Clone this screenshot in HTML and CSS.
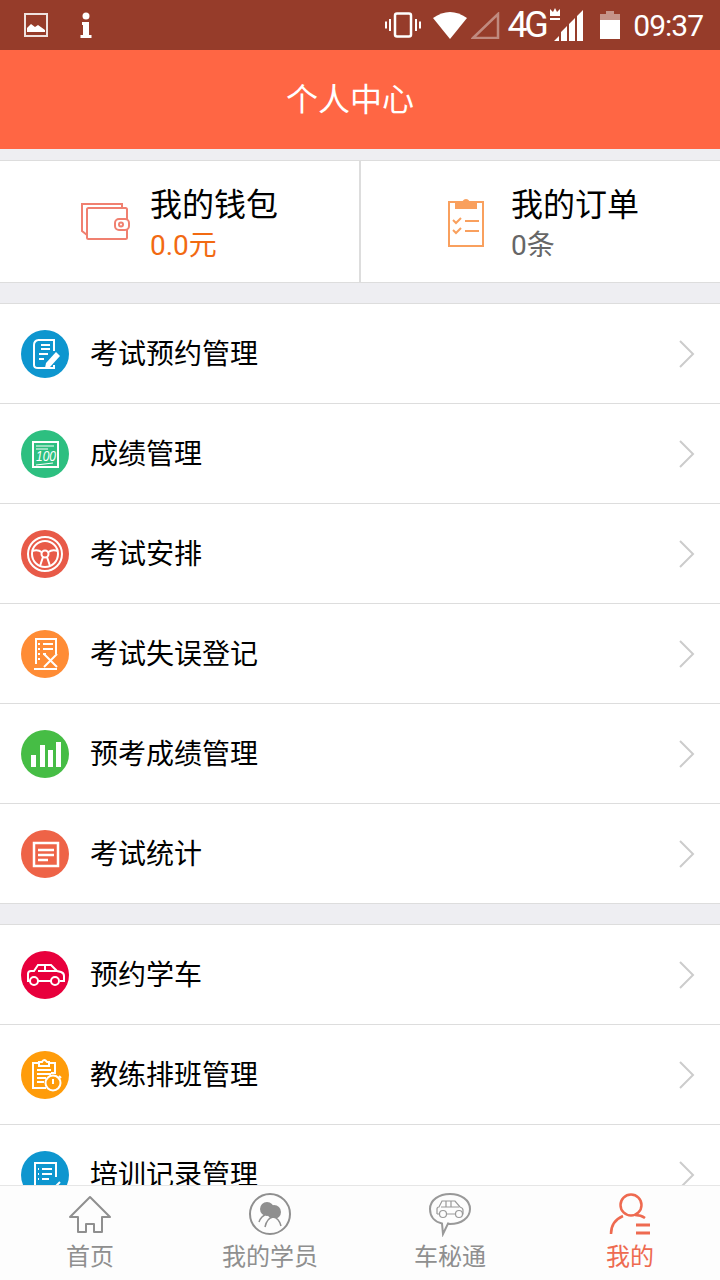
FILE: index.html
```html
<!DOCTYPE html>
<html lang="zh-CN">
<head>
  <meta charset="UTF-8" />
  <title>个人中心</title>
  <link rel="stylesheet" href="styles.css">
</head>
<body>
  <div class="page">
    <div class="status">
      <div class="status-left">
        <svg class="st-img" width="24" height="24" viewBox="0 0 24 24"><rect x="1" y="1" width="22" height="22" fill="none" stroke="#fff" stroke-width="2" opacity=".85"/><path d="M3 19v-4l4-4 4 3 3-2 7 5v2z" fill="#fff"/></svg>
        <svg class="st-i" width="12" height="26" viewBox="0 0 12 26"><circle cx="6" cy="4" r="3.500" fill="#fff"/><path d="M2 10h7v13h2.500v3H.5v-3H3v-10H2z" fill="#fff"/></svg>
      </div>
      <div class="status-right">
        <svg width="36" height="26" viewBox="0 0 36 26"><rect x="10" y="1.500" width="16" height="23" rx="2" fill="none" stroke="#fff" stroke-width="2.500"/><path d="M5 7v12M1 9.500v7M31 7v12M35 9.500v7" stroke="#fff" stroke-width="2"/></svg>
        <svg class="st-wifi" width="34" height="28" viewBox="0 0 34 28"><path d="M0 7Q17-5 34 7L17 28z" fill="#fff"/></svg>
        <svg class="st-sig" width="29" height="27" viewBox="0 0 29 27"><path d="M2 26L27 2v24z" fill="none" stroke="#fff" stroke-opacity=".4" stroke-width="2.500"/></svg>
        <span class="st-4g">4G</span>
        <svg class="st-bars" width="38" height="34" viewBox="0 0 38 34"><path d="M1 1l3 3 2-4 2 4 3-3v7H1zM1 10h10v2H1z" fill="#fff"/><path d="M5 33l5-5v5zM12 33v-9l6-6v15zM20 33V16l6-6v23zM28 33V8l6-6v31z" fill="#fff"/></svg>
        <svg class="st-bat" width="20" height="28" viewBox="0 0 20 28"><path d="M6 0h8v3h6v7H0V3h6z" fill="#fff" opacity=".45"/><rect y="9" width="20" height="19" fill="#fff"/></svg>
        <span class="st-time">09:37</span>
      </div>
    </div>

    <div class="header">个人中心</div>

    <div class="scroll">
      <div class="summary">
        <div class="cell cell-wallet">
          <svg class="wallet-ic" width="50" height="40" viewBox="0 0 50 40" fill="none" stroke="#f08070" stroke-width="2"><path d="M7 33L2 29V2h40v5"/><rect x="7" y="6" width="40" height="31" rx="1.500" fill="#fff"/><rect x="35" y="17" width="14" height="11" rx="4" fill="#fff"/><circle cx="41" cy="22.500" r="2"/></svg>
          <div>
            <div class="cell-title">我的钱包</div>
            <div class="cell-sub cell-sub-orange">0.0元</div>
          </div>
        </div>
        <div class="cell cell-order">
          <svg class="order-ic" width="36" height="50" viewBox="0 0 36 50" fill="none" stroke="#f9a05e" stroke-width="2"><path d="M8 5H1v44h34V5h-7"/><path d="M8 11V5h7q3-4 6 0h7v6z" fill="#f9a05e"/><path d="M5 23l3 3 5-5M5 33l3 3 5-5M17 24h14M17 34h14"/></svg>
          <div>
            <div class="cell-title">我的订单</div>
            <div class="cell-sub">0条</div>
          </div>
        </div>
      </div>

      <div class="group">
        <div class="row">
          <svg class="row-ic" width="48" height="48" viewBox="0 0 48 48"><circle cx="24" cy="24" r="24" fill="#0e96cf"/><g fill="none" stroke="#fff" stroke-width="2"><path d="M17 10h16v11M17 10q-4 1-4 5v20q0 3 4 3h16v-3"/><path d="M20 15h9M20 19h9M18 24h9M18 29h5"/></g><path d="M25 33l10-11 4 4-10 11-5 1z" fill="#fff"/></svg>
          <span class="row-name">考试预约管理</span>
          <svg class="chev" width="16" height="28" viewBox="0 0 16 28"><path d="M1 1l13 13L1 27" fill="none" stroke="#ccc" stroke-width="2"/></svg>
        </div>
        <div class="row">
          <svg class="row-ic" width="48" height="48" viewBox="0 0 48 48"><circle cx="24" cy="24" r="24" fill="#2dbf80"/><rect x="12" y="12" width="25" height="25" fill="none" stroke="#fff" stroke-width="2"/><path d="M15 16h18M15 19h12" stroke="#fff"/><text class="score" x="15" y="31" textLength="20" lengthAdjust="spacingAndGlyphs">100</text><path d="M15 35l17-2" fill="none" stroke="#fff"/></svg>
          <span class="row-name">成绩管理</span>
          <svg class="chev" width="16" height="28" viewBox="0 0 16 28"><path d="M1 1l13 13L1 27" fill="none" stroke="#ccc" stroke-width="2"/></svg>
        </div>
        <div class="row">
          <svg class="row-ic" width="48" height="48" viewBox="0 0 48 48"><circle cx="24" cy="24" r="24" fill="#e85a48"/><g fill="none" stroke="#fff" stroke-width="2"><circle cx="24" cy="24" r="17"/><circle cx="24" cy="24" r="13"/><circle cx="24" cy="24" r="3.500"/><path d="M11 21q6-2 9.500 1M27.500 22q3.500-3 9.500-1M22 27l-3 9M26 27l3 9"/></g></svg>
          <span class="row-name">考试安排</span>
          <svg class="chev" width="16" height="28" viewBox="0 0 16 28"><path d="M1 1l13 13L1 27" fill="none" stroke="#ccc" stroke-width="2"/></svg>
        </div>
        <div class="row">
          <svg class="row-ic" width="48" height="48" viewBox="0 0 48 48"><circle cx="24" cy="24" r="24" fill="#ff8c35"/><g fill="none" stroke="#fff" stroke-width="2"><path d="M15 34V9h20v15"/><path d="M22 14h10M22 19h10M22 24h3M17 14h2M17 19h2M17 24h2M17 29h2"/><path d="M23 24l13 13M36 24L23 37M13 39h23"/></g></svg>
          <span class="row-name">考试失误登记</span>
          <svg class="chev" width="16" height="28" viewBox="0 0 16 28"><path d="M1 1l13 13L1 27" fill="none" stroke="#ccc" stroke-width="2"/></svg>
        </div>
        <div class="row">
          <svg class="row-ic" width="48" height="48" viewBox="0 0 48 48"><circle cx="24" cy="24" r="24" fill="#46bd45"/><path d="M10 25h5v12h-5zM19 15h5v22h-5zM27 20h5v17h-5zM35 12h5v25h-5z" fill="#fff"/></svg>
          <span class="row-name">预考成绩管理</span>
          <svg class="chev" width="16" height="28" viewBox="0 0 16 28"><path d="M1 1l13 13L1 27" fill="none" stroke="#ccc" stroke-width="2"/></svg>
        </div>
        <div class="row">
          <svg class="row-ic" width="48" height="48" viewBox="0 0 48 48"><circle cx="24" cy="24" r="24" fill="#ee6347"/><rect x="13" y="13" width="24" height="23" fill="none" stroke="#fff" stroke-width="2.500"/><path d="M17 20h16M17 25h16M17 30h10" stroke="#fff" stroke-width="2.500"/></svg>
          <span class="row-name">考试统计</span>
          <svg class="chev" width="16" height="28" viewBox="0 0 16 28"><path d="M1 1l13 13L1 27" fill="none" stroke="#ccc" stroke-width="2"/></svg>
        </div>
      </div>

      <div class="group">
        <div class="row">
          <svg class="row-ic" width="48" height="48" viewBox="0 0 48 48"><circle cx="24" cy="24" r="24" fill="#e8003c"/><g fill="none" stroke="#fff" stroke-width="2"><path d="M9 30H7v-7q0-3 3-3h3l4-6h13l6 6 4 1q3 1 3 4v5h-4M17 30h13"/><path d="M17 20h19M24 14v6"/><circle cx="13" cy="30" r="4"/><circle cx="34" cy="30" r="4"/></g></svg>
          <span class="row-name">预约学车</span>
          <svg class="chev" width="16" height="28" viewBox="0 0 16 28"><path d="M1 1l13 13L1 27" fill="none" stroke="#ccc" stroke-width="2"/></svg>
        </div>
        <div class="row">
          <svg class="row-ic" width="48" height="48" viewBox="0 0 48 48"><circle cx="24" cy="24" r="24" fill="#ff9c0a"/><g fill="none" stroke="#fff" stroke-width="2"><path d="M18 12h-6v25h13M28 12h6v11"/><path d="M18 15v-4h3q2-4 5 0h2v4zM16 19h14M16 23h14M16 27h9M16 31h7"/></g><circle cx="32" cy="32" r="7.500" fill="#ff9c0a" stroke="#fff" stroke-width="2"/><path d="M32 28v5M30 22h4M38 25l2 2" stroke="#fff" stroke-width="2"/></svg>
          <span class="row-name">教练排班管理</span>
          <svg class="chev" width="16" height="28" viewBox="0 0 16 28"><path d="M1 1l13 13L1 27" fill="none" stroke="#ccc" stroke-width="2"/></svg>
        </div>
        <div class="row">
          <svg class="row-ic" width="48" height="48" viewBox="0 0 48 48"><circle cx="24" cy="24" r="24" fill="#0e96cf"/><g fill="none" stroke="#fff" stroke-width="2"><path d="M35 26V12H14v26h14"/><path d="M21 18h10M21 23h10M21 28h7M17 18h1M17 23h1M17 28h1M27 36l4 3 8-8"/></g></svg>
          <span class="row-name">培训记录管理</span>
          <svg class="chev" width="16" height="28" viewBox="0 0 16 28"><path d="M1 1l13 13L1 27" fill="none" stroke="#ccc" stroke-width="2"/></svg>
        </div>
      </div>
    </div>

    <div class="tabs">
      <div class="tab">
        <svg width="44" height="44" viewBox="0 0 44 44" fill="none" stroke="#8f8f8f" stroke-width="2"><path d="M2 24L22 4l20 20h-8v15h-8v-8h-8v8h-8V24z" stroke-linejoin="round"/></svg>
        <span>首页</span>
      </div>
      <div class="tab">
        <svg width="44" height="44" viewBox="0 0 44 44"><circle cx="22" cy="21" r="20" fill="none" stroke="#8f8f8f" stroke-width="2"/><circle cx="19" cy="16" r="7" fill="#8f8f8f"/><circle cx="26" cy="19" r="7" fill="#8f8f8f"/><path d="M11 29q2-6 8-8M17 34q2-9 8-10 6 1 8 9" fill="#fdfdfd" stroke="#8f8f8f" stroke-width="1.500"/></svg>
        <span>我的学员</span>
      </div>
      <div class="tab">
        <svg width="44" height="44" viewBox="0 0 44 44" fill="none" stroke="#999"><path d="M14 30.500C7 29 2 24 2 16 2 7 11 1 22 1s20 6 20 15-9 15-20 15q-1 0-2-.5L15 41z" stroke-width="2"/><path d="M9 21v-5q0-2 2-2l3-6h13l5 6q3 1 3 3v4h-1M19 21h9M11 21H9" stroke-width="1.200"/><path d="M13 14h18M18 8v6M23 8v6" stroke-width="1.200"/><circle cx="15" cy="21" r="3.500" stroke-width="1.200"/><circle cx="31" cy="21" r="3.500" stroke-width="1.200"/></svg>
        <span>车秘通</span>
      </div>
      <div class="tab tab-on">
        <svg width="44" height="44" viewBox="0 0 44 44" fill="none" stroke="#ee6a50" stroke-width="2.500"><circle cx="23" cy="12" r="10.500"/><path d="M3 41q0-13 12-18M27 22q6 0 10 3"/><path d="M28 32h14M28 40h14" stroke-width="3"/></svg>
        <span>我的</span>
      </div>
    </div>
  </div>
</body>
</html>
```

FILE: styles.css
```css
* {
  box-sizing: border-box;
}
body {
  margin: 0;
  font-family: "Noto Sans CJK SC", Roboto, sans-serif;
  color: #000;
}
.page {
  width: 720px;
  height: 1280px;
  display: flex;
  flex-direction: column;
  overflow: hidden;
  background-color: #eeeef2;
}
.status {
  height: 50px;
  flex: none;
  display: flex;
  align-items: center;
  justify-content: space-between;
  padding: 0 17px 0 24px;
  background-color: #963c2a;
  color: #fff;
  font-family: Roboto, sans-serif;
}
.status-left,
.status-right {
  display: flex;
  align-items: center;
}
.st-i {
  margin-left: 32px;
}
.st-wifi {
  margin-left: 12px;
}
.st-sig {
  margin-left: 4px;
}
.st-4g {
  margin-left: 8px;
  font-size: 36px;
  letter-spacing: -3.5px;
}
.st-bars {
  margin-left: 4px;
}
.st-bat {
  margin-left: 13px;
}
.st-time {
  margin-left: 13px;
  font-size: 30px;
  letter-spacing: -1px;
}
.header {
  height: 99px;
  flex: none;
  display: flex;
  align-items: center;
  justify-content: center;
  padding: 0 20px 6px 0;
  background-color: #ff6644;
  color: #fff;
  font-size: 32px;
  font-weight: 400;
}
.scroll {
  flex: 1;
  min-height: 0;
  overflow: hidden;
  padding-top: 11px;
}
.summary {
  height: 123px;
  display: flex;
  background-color: #fff;
  border-top: 1px solid #ddd;
  border-bottom: 1px solid #ddd;
}
.cell {
  display: flex;
  align-items: center;
}
.cell-wallet {
  width: 361px;
  padding-left: 80px;
  border-right: 2px solid #ddd;
}
.cell-order {
  flex: 1;
  padding-left: 87px;
}
.wallet-ic {
  margin-right: 20px;
}
.order-ic {
  margin-right: 27px;
}
.cell-title {
  margin-bottom: 4px;
  font-size: 32px;
  line-height: 44px;
}
.cell-sub {
  font-size: 28px;
  line-height: 36px;
  color: #666;
  font-family: Roboto, "Noto Sans CJK SC", sans-serif;
}
.cell-sub-orange {
  color: #f26a11;
}
.group {
  margin-top: 20px;
  background-color: #fff;
  border-top: 1px solid #ddd;
}
.row {
  height: 100px;
  display: flex;
  align-items: center;
  padding: 0 25px 0 21px;
  border-bottom: 1px solid #ddd;
}
.row-ic {
  flex: none;
}
.row-name {
  flex: 1;
  margin: 0 0 4px 21px;
  font-size: 28px;
}
.score {
  fill: #fff;
  font-family: "Liberation Sans", sans-serif;
  font-size: 15px;
  font-style: italic;
}
.tabs {
  height: 95px;
  flex: none;
  display: flex;
  background-color: #fdfdfd;
  border-top: 1px solid #e6e6e6;
}
.tab {
  flex: 1;
  display: flex;
  flex-direction: column;
  align-items: center;
  padding-top: 7px;
  color: #8f8f8f;
  font-size: 24px;
  line-height: 34px;
}
.tab svg {
  margin-bottom: 1px;
}
.tab-on {
  color: #ee6a50;
}
```
